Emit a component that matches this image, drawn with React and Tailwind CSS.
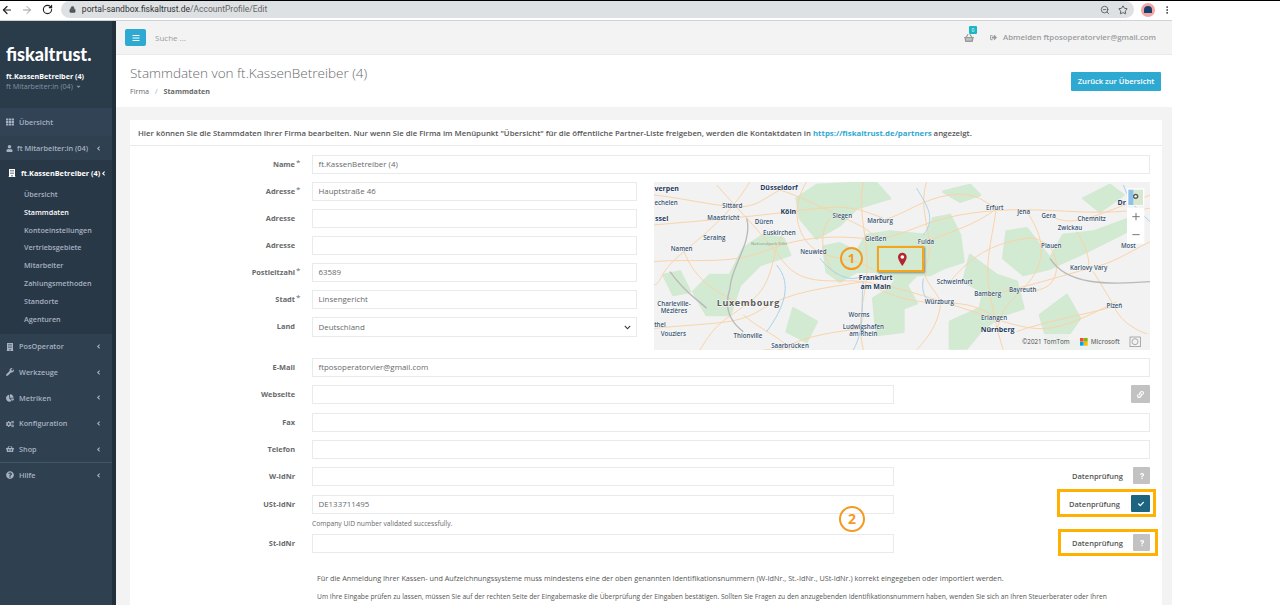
import {
  ArrowLeft,
  ArrowRight,
  RotateCw,
  Lock,
  ZoomOut,
  Star,
  MoreVertical,
} from "lucide-react";
import {
  FaTh,
  FaUser,
  FaBuilding,
  FaAngleLeft,
  FaWrench,
  FaChartPie,
  FaCogs,
  FaShoppingBasket,
  FaQuestionCircle,
  FaBars,
  FaSignOutAlt,
  FaLink,
  FaCheck,
  FaQuestion,
  FaCaretDown,
  FaChevronDown,
} from "react-icons/fa";

const subItems = [
  "Übersicht",
  "Stammdaten",
  "Kontoeinstellungen",
  "Vertriebsgebiete",
  "Mitarbeiter",
  "Zahlungsmethoden",
  "Standorte",
  "Agenturen",
];

// map labels, in 3x map coordinates
const mapLabels = [
  ["verpen", 50, 42, 1],
  ["Düsseldorf", 387, 40, 1],
  ["echelen", 48, 85],
  ["Sittard", 247, 92],
  ["Maastricht", 220, 128],
  ["Köln", 415, 110, 1],
  ["ssel", 35, 132, 1],
  ["Düren", 342, 140],
  ["Euskirchen", 388, 174],
  ["Seraing", 193, 190],
  ["Namen", 95, 222],
  ["Neuwied", 490, 231],
  ["Siegen", 577, 123],
  ["Marburg", 690, 137],
  ["Gießen", 677, 192],
  ["Fulda", 828, 200],
  ["Erfurt", 1034, 98],
  ["Jena", 1121, 110],
  ["Gera", 1196, 122],
  ["Chemnitz", 1325, 133],
  ["Zwickau", 1260, 160],
  ["Plauen", 1204, 214],
  ["Most", 1435, 213],
  ["Dr", 1415, 85, 1],
  ["Karlovy Vary", 1316, 278],
  ["Frankfurt", 677, 309, 1],
  ["am Main", 677, 335, 1],
  ["Schweinfurt", 914, 321],
  ["Bamberg", 1013, 358],
  ["Bayreuth", 1118, 346],
  ["Würzburg", 868, 382],
  ["Charleville-", 72, 386],
  ["Mézières", 72, 408],
  ["Worms", 627, 420],
  ["Ludwigshafen", 640, 456],
  ["am Rhein", 640, 478],
  ["Erlangen", 1032, 428],
  ["Nürnberg", 1043, 466, 1],
  ["Plzeň", 1393, 393],
  ["Thionville", 294, 484],
  ["Saarbrücken", 420, 513],
  ["thel", 30, 450],
  ["Vouziers", 70, 476],
];

const greens = [
  "M520 215 L570 205 L620 230 L650 180 L720 170 L830 180 L850 130 L900 120 L930 180 L940 260 L880 280 L840 300 L800 300 L770 330 L800 385 L760 400 L760 470 L680 480 L670 370 L720 340 L740 310 L680 290 L620 290 L570 320 L530 290Z",
  "M440 70 L500 30 L600 25 L680 25 L720 70 L620 100 L570 150 L500 190 L450 130Z",
  "M280 220 L340 180 L400 190 L420 240 L330 270 L270 330 L240 420 L170 420 L130 350 L180 300 L240 300Z",
  "M1070 170 L1130 160 L1200 250 L1240 180 L1330 170 L1440 130 L1430 170 L1310 230 L1200 280 L1120 300 L1060 250Z",
  "M960 240 L1040 300 L1100 320 L1120 400 L1060 420 L1000 460 L950 520 L900 520 L900 440 L990 400 L1000 350 L940 320Z",
  "M1170 420 L1250 360 L1290 430 L1240 500 L1340 500 L1350 525 L1200 525Z",
  "M880 50 L960 30 L990 60 L930 80Z",
  "M1300 70 L1380 30 L1420 60 L1350 110Z",
  "M40 300 L90 290 L120 350 L70 360Z",
  "M430 400 L500 440 L470 500 L410 470Z",
];

const roads = [
  "M12 260 C120 250 240 270 340 230 S520 180 640 190 S800 130 1000 110 S1300 130 1500 100",
  "M200 30 C280 120 340 180 400 260 S560 310 640 320 S820 360 1000 420 S1200 480 1400 380",
  "M640 20 C620 120 660 200 650 300 S620 430 640 525",
  "M12 150 C120 140 260 130 420 110 S600 90 700 130",
  "M470 20 C420 100 440 180 490 220 S610 240 680 290",
  "M830 20 C800 110 860 200 830 260 S880 350 870 400 S840 480 800 525",
  "M1040 90 C1030 180 1000 260 1020 360 S1040 460 1060 525",
  "M1130 110 C1180 180 1200 260 1120 340 S1060 420 1040 460",
  "M640 320 C520 340 420 350 340 400 S220 440 12 460",
  "M1010 360 C1120 340 1240 300 1320 280 S1420 240 1500 200",
  "M300 20 C240 120 160 180 90 240 S40 320 12 330",
  "M280 420 C340 470 400 490 420 525",
  "M1200 120 C1260 160 1320 130 1500 60",
  "M1330 290 C1360 340 1380 370 1395 400 S1440 460 1500 480",
  "M12 60 C100 70 180 90 250 95 S340 70 390 45",
  "M390 45 C440 60 500 90 575 125 S660 170 680 190",
  "M700 135 C760 120 820 70 900 60 S1000 80 1040 100",
  "M830 200 C900 170 980 150 1040 100",
  "M900 320 C950 260 1000 220 1080 200 S1160 190 1200 215",
  "M400 175 C360 230 380 320 300 380 S200 440 150 525",
  "M100 225 C130 300 170 340 280 390",
  "M1200 215 C1240 280 1220 360 1120 345",
  "M870 385 C950 380 1000 400 1040 430",
  "M640 460 C560 470 480 480 420 510 S380 520 340 525",
  "M680 340 C740 370 790 380 870 385",
  "M540 130 C500 180 520 260 560 300",
  "M1280 170 C1300 200 1320 240 1316 280",
  "M1390 395 C1300 420 1180 440 1100 470",
];

function SidebarItem({ icon: Icon, label, divider }) {
  return (
    <div
      className={`flex items-center h-[25.6px] pl-[6px] pr-[10px] text-[7.3px] font-semibold text-[#a7b1c2] ${
        divider ? "border-t border-[#43566a]" : ""
      }`}
    >
      <Icon className="text-[8px] mr-[5px] shrink-0" />
      <span className="flex-1 whitespace-nowrap">{label}</span>
      <FaAngleLeft className="text-[7px] shrink-0" />
    </div>
  );
}

function Sidebar() {
  return (
    <aside className="w-[116px] shrink-0 bg-[#2f4050] border-r-4 border-[#22303c] flex flex-col">
      <div className="h-[87px] bg-[#2a3b4a] pl-[6px] pt-[22px]">
        <div className="text-white font-['Lato',sans-serif] font-black text-[18px] leading-[22px]">
          fiskaltrust.
        </div>
        <div className="text-white font-bold text-[7.2px] mt-[6px] leading-[10px] whitespace-nowrap">
          ft.KassenBetreiber (4)
        </div>
        <div className="text-[#8095a8] text-[7.2px] leading-[10px] flex items-center">
          ft Mitarbeiter:in (04)
          <FaCaretDown className="text-[7px] ml-[2px]" />
        </div>
      </div>
      <div className="h-[28px] bg-[#314355] flex items-center pl-[6px] text-[7.3px] font-semibold text-[#a7b1c2]">
        <FaTh className="mr-[5px] text-[8px]" />
        Übersicht
      </div>
      <div className="h-[24px] flex items-center pl-[6px] pr-[10px] text-[7.3px] font-semibold text-[#a7b1c2]">
        <FaUser className="mr-[4px] text-[7px] shrink-0" />
        <span className="flex-1 whitespace-nowrap">ft Mitarbeiter:in (04)</span>
        <FaAngleLeft className="text-[7px] shrink-0" />
      </div>
      <div className="bg-[#293846] h-[174px]">
        <div className="flex items-center h-[26px] pl-[8px] pr-[8px] text-[7.3px] font-bold text-white">
          <FaBuilding className="text-[8px] mr-[5px] shrink-0" />
          <span className="flex-1 whitespace-nowrap">ft.KassenBetreiber (4)</span>
          <FaAngleLeft className="text-[7px] shrink-0" />
        </div>
        {subItems.map((item) => (
          <div
            key={item}
            className={`h-[17.8px] leading-[17.8px] pl-[24px] text-[7.2px] font-semibold ${
              item === "Stammdaten" ? "text-white" : "text-[#a7b1c2]"
            }`}
          >
            {item}
          </div>
        ))}
      </div>
      <SidebarItem icon={FaBuilding} label="PosOperator" />
      <SidebarItem icon={FaWrench} label="Werkzeuge" />
      <SidebarItem icon={FaChartPie} label="Metriken" />
      <SidebarItem icon={FaCogs} label="Konfiguration" />
      <SidebarItem icon={FaShoppingBasket} label="Shop" />
      <SidebarItem icon={FaQuestionCircle} label="Hilfe" divider />
    </aside>
  );
}

function Input({ value = "", className = "" }) {
  return (
    <div
      className={`h-[19px] bg-white border border-[#e9eaeb] px-[5.5px] text-[7.9px] leading-[17px] text-[#676a6c] ${className}`}
    >
      {value}
    </div>
  );
}

function Label({ text, required }) {
  return (
    <div className="w-[165px] shrink-0 mr-[17px] text-right text-[7.4px] font-bold leading-[19px] text-[#676a6c] relative">
      {text}
      {required && <span className="absolute left-[166px] -top-[3px] text-[8px] font-normal">*</span>}
    </div>
  );
}

function VerifyRow({ label, value, check }) {
  return (
    <div className="flex">
      <Label text={label} />
      <Input value={value} className="w-[582px]" />
      <div className="flex-1 flex items-start justify-end text-[7.5px] font-semibold leading-[19px] text-[#555]">
        <span className={check ? "mr-[11px]" : "mr-[10px]"}>Datenprüfung</span>
        <div
          className={`h-[17px] rounded-[1px] flex items-center justify-center text-white ${
            check ? "w-[19px] bg-[#1c6480]" : "w-[17px] bg-[#c2c2c2]"
          }`}
        >
          {check ? <FaCheck className="text-[6px]" /> : <FaQuestion className="text-[6px]" />}
        </div>
      </div>
    </div>
  );
}

function MapPreview() {
  return (
    <svg viewBox="12 21 1488 504" className="w-full h-full block bg-[#f2f2f2]">
      {greens.map((d) => (
        <path key={d} d={d} fill="#d2e9d2" stroke="#d2e9d2" strokeWidth="8" strokeLinejoin="round" />
      ))}
      {roads.map((d) => (
        <path key={d} d={d} fill="none" stroke="#fbd3a8" strokeWidth="3" />
      ))}
      <path d="M510 250 C540 290 600 330 640 300 M640 320 C630 390 650 450 610 525 M820 310 C810 370 840 390 880 380 M380 270 C430 330 400 400 350 470" fill="none" stroke="#a9d2ea" strokeWidth="3" />
      <path d="M800 40 C830 90 860 130 820 180 M1420 30 C1440 90 1480 120 1500 140" fill="none" stroke="#a9d2ea" strokeWidth="3" />
      <path d="M290 130 C310 200 240 280 240 340 C220 400 240 440 280 470 M60 290 C110 360 140 370 170 400 M1200 250 C1250 330 1370 330 1500 320" fill="none" stroke="#b9b9b9" strokeWidth="4" />
      {mapLabels.map(([t, x, y, bold]) => (
        <text
          key={t}
          x={x}
          y={y + 6}
          textAnchor="middle"
          fontSize={bold ? 21 : 18.5}
          fontWeight={bold ? 700 : 600}
          fill={bold ? "#1d3a5c" : "#34526f"}
          stroke="#ffffff"
          strokeWidth="2"
          paintOrder="stroke"
        >
          {t}
        </text>
      ))}
      <text x="357" y="209" textAnchor="middle" fontSize="13" fill="#7d9a7d">
        Nationalpark Eifel
      </text>
      <text x="295" y="393" textAnchor="middle" fontSize="27" fontWeight="700" letterSpacing="2" fill="#5c5c5c" stroke="#ffffff" strokeWidth="2.5" paintOrder="stroke">
        Luxembourg
      </text>
      <path d="M757 233 a13 13 0 0 1 13 13 c0 10 -13 27 -13 27 s-13 -17 -13 -27 a13 13 0 0 1 13 -13z" fill="#b3262e" />
      <circle cx="757" cy="246" r="5.5" fill="#ffffff" />
      {/* zoom controls */}
      <rect x="1431" y="40" width="52" height="52" fill="#ffffff" />
      <rect x="1435" y="44" width="16" height="46" fill="#8ec1e8" />
      <rect x="1451" y="44" width="28" height="46" fill="#d8e8d0" />
      <circle cx="1457" cy="64" r="8" fill="#5c5c5c" />
      <circle cx="1457" cy="64" r="3.5" fill="#ffffff" />
      <rect x="1431" y="98" width="52" height="108" fill="#ffffff" />
      <path d="M1447 125 h22 M1458 114 v22 M1447 179 h22" stroke="#777" strokeWidth="3" />
      {/* attribution */}
      <rect x="1100" y="477" width="400" height="48" fill="#f2f2f2" opacity="0.85" />
      <text x="1116" y="508" fontSize="19" fill="#4c4c4c">
        ©2021 TomTom
      </text>
      <rect x="1290" y="489" width="11" height="11" fill="#f25022" />
      <rect x="1302" y="489" width="11" height="11" fill="#7fba00" />
      <rect x="1290" y="501" width="11" height="11" fill="#00a4ef" />
      <rect x="1302" y="501" width="11" height="11" fill="#ffb900" />
      <text x="1322" y="508" fontSize="19" fontWeight="600" fill="#737373">
        Microsoft
      </text>
      <rect x="1440" y="486" width="31" height="29" fill="#f2f2f2" stroke="#888" strokeWidth="2" />
      <circle cx="1455" cy="500" r="9" fill="none" stroke="#888" strokeWidth="2" />
    </svg>
  );
}

function Form() {
  const left = [
    ["Adresse", "Hauptstraße 46", true],
    ["Adresse", ""],
    ["Adresse", ""],
    ["Postleitzahl", "63589", true],
    ["Stadt", "Linsengericht", true],
  ];
  return (
    <div className="pt-[9px] pr-[12px]">
      <div className="flex mb-[8px]">
        <Label text="Name" required />
        <Input value="ft.KassenBetreiber (4)" className="flex-1" />
      </div>
      <div className="flex mb-[8px]">
        <div className="w-[507px] shrink-0">
          {left.map(([label, value, req], i) => (
            <div key={i} className="flex mb-[8px]">
              <Label text={label} required={req} />
              <Input value={value} className="flex-1" />
            </div>
          ))}
          <div className="flex">
            <Label text="Land" />
            <div className="flex-1 h-[20px] bg-white border border-[#e9eaeb] px-[5.5px] text-[7.9px] leading-[18px] text-[#676a6c] flex items-center justify-between">
              Deutschland
              <FaChevronDown className="text-[7px] text-[#333]" />
            </div>
          </div>
        </div>
        <div className="ml-[17px] flex-1 h-[168px]">
          <MapPreview />
        </div>
      </div>
      <div className="flex mb-[8px]">
        <Label text="E-Mail" />
        <Input value="ftposoperatorvier@gmail.com" className="flex-1" />
      </div>
      <div className="flex mb-[9px]">
        <Label text="Webseite" />
        <Input className="w-[582px]" />
        <div className="flex-1 flex justify-end">
          <div className="w-[19px] h-[18px] rounded-[1px] bg-[#c2c2c2] flex items-center justify-center text-white">
            <FaLink className="text-[7px]" />
          </div>
        </div>
      </div>
      <div className="flex mb-[8px]">
        <Label text="Fax" />
        <Input className="flex-1" />
      </div>
      <div className="flex mb-[8px]">
        <Label text="Telefon" />
        <Input className="flex-1" />
      </div>
      <div className="mb-[9px]">
        <VerifyRow label="W-IdNr" />
      </div>
      <VerifyRow label="USt-IdNr" value="DE133711495" check />
      <div className="ml-[182px] text-[6.7px] leading-[20px] h-[20px] text-[#676a6c]">
        Company UID number validated successfully.
      </div>
      <VerifyRow label="St-IdNr" />
      <div className="ml-[187px] mt-[20px] w-[850px] text-[#555]">
        <p className="whitespace-nowrap text-[7.25px] leading-[10px]">
          Für die Anmeldung Ihrer Kassen- und Aufzeichnungssysteme muss mindestens eine der oben genannten Identifikationsnummern (W-IdNr., St.-IdNr., USt-IdNr.) korrekt eingegeben oder importiert werden.
        </p>
        <p className="whitespace-nowrap text-[6.7px] leading-[10px] mt-[9px]">
          Um Ihre Eingabe prüfen zu lassen, müssen Sie auf der rechten Seite der Eingabemaske die Überprüfung der Eingaben bestätigen. Sollten Sie Fragen zu den anzugebenden Identifikationsnummern haben, wenden Sie sich an Ihren Steuerberater oder Ihren
        </p>
      </div>
    </div>
  );
}

export default function App() {
  return (
    <div className="relative w-[1280px] h-[605px] overflow-hidden bg-white font-['Open_Sans',sans-serif] text-[#676a6c]">
      {/* browser bar */}
      <div className="h-[1px] bg-black" />
      <div className="w-[1172px] h-[20px] bg-white flex items-center pb-[2px] border-b border-[#cfd2d6]">
        <ArrowLeft size={12} className="text-[#222] ml-[1px]" strokeWidth={2.5} />
        <ArrowRight size={12} className="text-[#9a9a9a] ml-[8px]" strokeWidth={2} />
        <RotateCw size={11} className="text-[#222] ml-[9px]" strokeWidth={2.5} />
        <div className="ml-[8px] w-[1078px] h-[17px] rounded-full bg-[#dee1e3] flex items-center pl-[8px] text-[8.5px] font-['Roboto',sans-serif]">
          <Lock size={7} className="text-[#555] mr-[6px]" fill="#555" />
          <span className="text-[#333]">portal-sandbox.fiskaltrust.de</span>
          <span className="text-[#666]">/AccountProfile/Edit</span>
          <ZoomOut size={10} className="text-[#555] ml-auto mr-[8px]" />
          <Star size={10} className="text-[#444] mr-[6px]" />
        </div>
        <div className="ml-[7px] w-[14px] h-[14px] rounded-full bg-[#f4a6a6] flex items-center justify-center">
          <div className="w-[8px] h-[7px] rounded-t-full bg-[#17406d]" />
        </div>
        <MoreVertical size={10} className="text-[#333] ml-[7px] shrink-0" />
      </div>

      <div className="w-[1172px] h-[584px] flex bg-[#f3f3f4]">
        <Sidebar />
        <main className="flex-1 min-w-0 flex flex-col">
          {/* top nav */}
          <div className="h-[34px] shrink-0 border-b border-[#e7eaec] flex items-center pl-[9px] pr-[16px]">
            <div className="w-[21px] h-[17px] rounded-[2px] bg-[#2ea9d1] flex items-center justify-center text-white">
              <FaBars className="text-[8px]" />
            </div>
            <span className="ml-[9px] text-[8px] text-[#999c9e]">Suche ...</span>
            <div className="ml-auto relative mr-[16px] text-[#9a9a9a]">
              <FaShoppingBasket className="text-[10px]" />
              <span className="absolute -top-[7px] left-[5px] w-[8px] h-[8px] bg-[#1ab8c4] text-white text-[5px] leading-[8px] text-center rounded-[1px]">
                0
              </span>
            </div>
            <FaSignOutAlt className="text-[7px] text-[#999c9e] mr-[6px]" />
            <span className="text-[7.8px] font-semibold text-[#999c9e]">
              Abmelden ftposoperatorvier@gmail.com
            </span>
          </div>

          {/* page heading */}
          <div className="h-[52px] shrink-0 bg-white flex items-center justify-between pl-[14px] pr-[11px]">
            <div className="-mt-[2px]">
              <h1 className="text-[13.5px] font-light leading-[18px] text-[#676a6c] whitespace-nowrap">
                Stammdaten von ft.KassenBetreiber (4)
              </h1>
              <div className="text-[7.2px] mt-[4px]">
                Firma <span className="mx-[4px] text-[#aaa]">/</span>{" "}
                <strong className="font-bold">Stammdaten</strong>
              </div>
            </div>
            <div className="h-[19px] w-[90px] text-center rounded-[1px] bg-[#2ea9d1] text-white text-[7.6px] font-semibold leading-[19px]">
              Zurück zur Übersicht
            </div>
          </div>

          {/* card */}
          <div className="flex-1 min-h-0 pt-[13px] pl-[14px] pr-[10px] overflow-hidden">
            <div className="bg-white h-[600px]">
              <div className="h-[26px] border-b border-[#e7eaec] pl-[8px] text-[7.8px] font-semibold leading-[26px] text-[#555] whitespace-nowrap">
                Hier können Sie die Stammdaten Ihrer Firma bearbeiten. Nur wenn Sie die Firma im Menüpunkt "Übersicht" für die öffentliche Partner-Liste freigeben, werden die Kontaktdaten in{" "}
                <a className="text-[#2ea9d1] font-bold">https://fiskaltrust.de/partners</a> angezeigt.
              </div>
              <Form />
            </div>
          </div>
        </main>
      </div>

      {/* annotations on top of the screenshot */}
      <div className="absolute left-[877px] top-[246px] w-[47px] h-[26px] border-[2px] border-[#f4a51c] shadow-[1px_1px_2px_rgba(0,0,0,0.4)]" />
      <div className="absolute left-[840px] top-[247px] w-[23px] h-[23px] rounded-full border-[2px] border-[#f59a1f] text-[#f59a1f] text-[13px] font-bold leading-[19px] text-center">
        1
      </div>
      <div className="absolute left-[839px] top-[506px] w-[26px] h-[26px] rounded-full border-[2px] border-[#f59a1f] text-[#f59a1f] text-[14px] font-bold leading-[22px] text-center">
        2
      </div>
      <div className="absolute left-[1057px] top-[489px] w-[99px] h-[28px] border-[3px] border-[#ffb000]" />
      <div className="absolute left-[1058px] top-[529px] w-[100px] h-[27px] border-[3px] border-[#ffb000]" />
    </div>
  );
}
